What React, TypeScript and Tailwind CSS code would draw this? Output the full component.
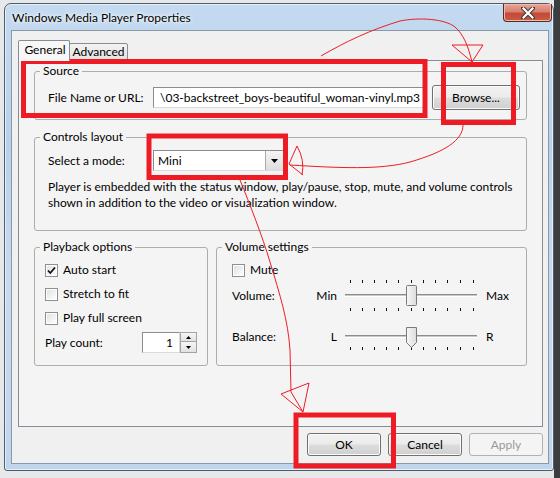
import React from 'react';

const ticks = [7, 19, 31, 43, 55, 68, 80, 92, 104, 117, 130];

const CheckBox = ({ checked }: { checked?: boolean }) => (
  <span className="w-[13px] h-[13px] shrink-0 border border-[#8e8f8f] bg-white p-[1px] flex">
    <span className="flex-1 bg-[linear-gradient(135deg,#e2e2e2,#fdfdfd)] flex items-center justify-center">
      {checked && (
        <svg width="9" height="9" viewBox="0 0 9 9">
          <path d="M1 4.5 L3.3 7 L8 1.5" stroke="#111" strokeWidth="1.8" fill="none" />
        </svg>
      )}
    </span>
  </span>
);

const Slider = ({ pointer }: { pointer?: boolean }) => (
  <svg width="137" height="36" viewBox="0 0 137 36" className="shrink-0">
    <defs>
      <linearGradient id={pointer ? 'thb' : 'thv'} x1="0" y1="0" x2="1" y2="0">
        <stop offset="0" stopColor="#f7f7f7" />
        <stop offset="1" stopColor="#dcdcdc" />
      </linearGradient>
    </defs>
    {!pointer &&
      ticks.map((x) => (
        <line key={'a' + x} x1={x + 0.5} x2={x + 0.5} y1={2} y2={5} stroke="#111" />
      ))}
    {ticks.map((x) => (
      <line key={'b' + x} x1={x + 0.5} x2={x + 0.5} y1={pointer ? 28 : 30} y2={pointer ? 31 : 33} stroke="#111" />
    ))}
    <rect x="2" y="16" width="132" height="1" fill="#8c8c8c" />
    <rect x="2" y="17" width="132" height="1" fill="#c8c8c8" />
    <rect x="2" y="18" width="132" height="1" fill="#ffffff" />
    {pointer ? (
      <path d="M63.5 8.5 H73.5 V23.5 L68.5 28.5 L63.5 23.5 Z" fill="url(#thb)" stroke="#7a7a7a" />
    ) : (
      <rect x="63.5" y="7.5" width="10" height="20" rx="1" fill="url(#thv)" stroke="#7a7a7a" />
    )}
  </svg>
);

const Button = ({ label, disabled }: { label: string; disabled?: boolean }) => (
  <div
    className={
      disabled
        ? 'w-[74px] h-[23px] rounded-[3px] border border-[#adb2b5] bg-[#f4f4f4] text-[#9a9a9a] flex items-center justify-center'
        : 'w-[74px] h-[23px] rounded-[3px] border border-[#707070] bg-[linear-gradient(#f2f2f2_0%,#ebebeb_48%,#dddddd_52%,#cfcfcf_100%)] shadow-[inset_0_0_0_1px_#fbfbfb] flex items-center justify-center'
    }
  >
    {label}
  </div>
);

export default function App() {
  return (
    <div className="relative w-[560px] h-[478px] overflow-hidden bg-[linear-gradient(to_right,#e6e8ea_554px,#3b3d40_554px)] font-['Lato',sans-serif] text-[12px] leading-[16px] text-black">
      {/* dialog window */}
      <div className="ml-[4px] mt-[3px] w-[550px] h-[468px] rounded-t-[7px] rounded-b-[3px] border border-[#4d5b6b] bg-[linear-gradient(180deg,#c4daf0_0%,#b8d0ea_30%,#c7dbef_60%,#bfd5ec_100%)] shadow-[inset_0_0_0_1px_#e6f0fa] flex flex-col pl-[6px] pr-[4px] pb-[6px]">
        <div className="h-[26px] flex items-start justify-between">
          <div className="pt-[6px] pl-[1px] text-[12px] [text-shadow:0_0_6px_#ffffff,0_0_3px_#ffffff]">
            Windows Media Player Properties
          </div>
          <div className="w-[49px] h-[18px] -mr-[3px] rounded-b-[4px] border border-[#5a2a25] border-t-0 bg-[linear-gradient(180deg,#e8a597_0%,#d7806f_45%,#c24a38_55%,#c95c44_100%)] shadow-[inset_0_0_0_1px_#f0b7aa] flex items-center justify-center">
            <svg width="14" height="12" viewBox="0 0 14 12">
              <path d="M2 1 L12 11 M12 1 L2 11" stroke="#3b3b3b" strokeWidth="4.2" strokeLinecap="square" />
              <path d="M2.5 1.5 L11.5 10.5 M11.5 1.5 L2.5 10.5" stroke="#ffffff" strokeWidth="2.2" strokeLinecap="square" />
            </svg>
          </div>
        </div>

        {/* client area */}
        <div className="flex-1 border border-[#8a98a8] bg-[#f0f0f0] pt-[9px] pl-[6px] pr-[5px] flex flex-col">
          {/* tabs */}
          <div className="flex items-end h-[20px]">
            <div className="relative z-10 w-[52px] h-[21px] -mb-[1px] border border-b-0 border-[#898c95] rounded-t-[2px] bg-[#f7f7f7] flex items-start justify-center pt-[1px] pl-[2px]">
              General
            </div>
            <div className="-ml-[1px] w-[59px] h-[17px] border border-[#898c95] rounded-t-[2px] bg-[linear-gradient(#f3f3f3,#e3e3e3)] flex items-center justify-center">
              Advanced
            </div>
          </div>

          {/* tab panel */}
          <div className="h-[367px] border border-[#898c95] bg-[#f4f4f4] pt-[2px] px-[15px] flex flex-col">
            <fieldset className="border border-[#adadad] rounded-[3px] px-[5px] pb-[9px]">
              <legend className="px-[3px]">Source</legend>
              <div className="flex items-center pl-[8px] pt-[6px] h-[31px]">
                <span className="w-[105px] shrink-0">File Name or URL:</span>
                <div className="w-[272px] h-[21px] border border-[#dadada] border-t-[#8c8c8c] border-l-[#8c8c8c] bg-white pl-[6px] flex items-center overflow-hidden whitespace-nowrap">
                  \03-backstreet_boys-beautiful_woman-vinyl.mp3
                </div>
                <div className="ml-[7px] w-[88px] h-[25px] rounded-[3px] border border-[#707070] bg-[linear-gradient(#f2f2f2_0%,#ebebeb_48%,#dddddd_52%,#cfcfcf_100%)] shadow-[inset_0_0_0_1px_#fbfbfb] flex items-center justify-center">
                  Browse...
                </div>
              </div>
            </fieldset>

            <fieldset className="mt-[9px] border border-[#adadad] rounded-[3px] px-[5px] pb-[19px]">
              <legend className="px-[3px]">Controls layout</legend>
              <div className="flex items-center pl-[8px] pt-[5px]">
                <span className="w-[105px] shrink-0">Select a mode:</span>
                <div className="w-[131px] h-[21px] border border-[#dadada] border-t-[#8c8c8c] border-l-[#8c8c8c] bg-white flex items-stretch">
                  <span className="flex-1 pl-[4px] flex items-center">Mini</span>
                  <span className="w-[18px] border-l border-[#a9a9a9] bg-[linear-gradient(#f4f4f4,#dedede)] flex items-center justify-center">
                    <svg width="7" height="4" viewBox="0 0 7 4">
                      <path d="M0 0 H7 L3.5 4 Z" fill="#000" />
                    </svg>
                  </span>
                </div>
              </div>
              <p className="pl-[8px] mt-[8px] whitespace-nowrap">
                Player is embedded with the status window, play/pause, stop, mute, and volume controls
                <br />
                shown in addition to the video or visualization window.
              </p>
            </fieldset>

            <div className="mt-[8px] flex gap-[8px]">
              <fieldset className="w-[174px] border border-[#adadad] rounded-[3px] px-[5px] pb-[12px]">
                <legend className="px-[3px]">Playback options</legend>
                <div className="pl-[5px] pr-[5px]">
                  <label className="mt-[7px] h-[16px] flex items-center gap-[5px]">
                    <CheckBox checked />
                    Auto start
                  </label>
                  <label className="mt-[8px] h-[16px] flex items-center gap-[5px]">
                    <CheckBox />
                    Stretch to fit
                  </label>
                  <label className="mt-[8px] h-[16px] flex items-center gap-[5px]">
                    <CheckBox />
                    Play full screen
                  </label>
                  <div className="mt-[6px] h-[21px] flex items-center justify-between">
                    <span>Play count:</span>
                    <div className="flex h-[21px]">
                      <div className="w-[38px] border border-[#dadada] border-t-[#8c8c8c] border-l-[#8c8c8c] bg-white flex items-center justify-end pr-[6px]">
                        1
                      </div>
                      <div className="w-[17px] flex flex-col">
                        <span className="h-[10px] border border-[#a3a3a3] bg-[linear-gradient(#f6f6f6,#e2e2e2)] flex items-center justify-center">
                          <svg width="5" height="3" viewBox="0 0 5 3"><path d="M0 3 H5 L2.5 0 Z" fill="#000" /></svg>
                        </span>
                        <span className="h-[11px] border border-t-0 border-[#a3a3a3] bg-[linear-gradient(#f6f6f6,#e2e2e2)] flex items-center justify-center">
                          <svg width="5" height="3" viewBox="0 0 5 3"><path d="M0 0 H5 L2.5 3 Z" fill="#000" /></svg>
                        </span>
                      </div>
                    </div>
                  </div>
                </div>
              </fieldset>

              <fieldset className="flex-1 border border-[#adadad] rounded-[3px] px-[5px] pb-[10px]">
                <legend className="px-[3px]">Volume settings</legend>
                <div className="pl-[10px]">
                  <label className="mt-[7px] h-[16px] flex items-center gap-[5px]">
                    <CheckBox />
                    Mute
                  </label>
                  <div className="h-[36px] flex items-center">
                    <span className="w-[68px]">Volume:</span>
                    <span className="w-[37px] text-right">Min</span>
                    <span className="ml-[6px] flex"><Slider /></span>
                    <span className="ml-[6px]">Max</span>
                  </div>
                  <div className="mt-[5px] h-[36px] flex items-center">
                    <span className="w-[68px]">Balance:</span>
                    <span className="w-[37px] text-right">L</span>
                    <span className="ml-[6px] flex"><Slider pointer /></span>
                    <span className="ml-[6px]">R</span>
                  </div>
                </div>
              </fieldset>
            </div>
          </div>

          {/* buttons */}
          <div className="mt-[6px] flex justify-end gap-[7px]">
            <Button label="OK" />
            <Button label="Cancel" />
            <Button label="Apply" disabled />
          </div>
        </div>
      </div>

      {/* red annotations */}
      <svg className="absolute inset-0 pointer-events-none" width="560" height="478" viewBox="0 0 560 478">
        <g fill="none" stroke="#ed1c24" strokeWidth="5">
          <rect x="23.5" y="61.5" width="401.5" height="54" />
          <rect x="443.5" y="64.5" width="70" height="58" />
          <rect x="149" y="136" width="136.5" height="41.5" />
          <rect x="296" y="415" width="97.5" height="51" />
        </g>
        <g fill="none" stroke="#ed1c24" strokeWidth="1">
          <path d="M321 56 C345 42 370 30 400 21 C420 17 445 19 455 27 C463 34 468 45 472 62" />
          <path d="M452 45 L483 45 L472 62 Z" />
          <path d="M463 125 C463 140 445 152 410 162 C380 170 340 168 290 165" />
          <path d="M297 146 L289 164 L303 175 M297 146 Q305 160 302 175" />
          <path d="M240 180 C250 205 262 235 270 262 C280 295 288 320 290 350 L291 392 L303 412" />
          <path d="M281 394 L309 383 L303 412 Z" />
        </g>
      </svg>
    </div>
  );
}
